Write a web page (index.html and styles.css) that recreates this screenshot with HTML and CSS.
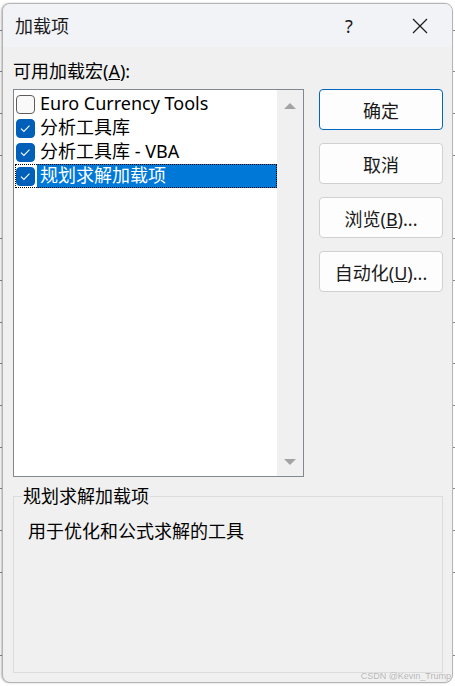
FILE: index.html
```html
<!DOCTYPE html>
<html lang="zh-CN">
<head>
    <meta charset="UTF-8">
    <meta name="viewport" content="width=device-width, initial-scale=1.0">
    <title>加载项</title>
    <link rel="stylesheet" href="styles.css">
</head>
<body>
    <div class="window">
        <div class="titlebar">
            <span class="title">加载项</span>
            <span class="help">?</span>
            <span class="close">
                <svg width="16" height="16" viewBox="0 0 16 16">
                    <path d="M1 1 L15 15 M15 1 L1 15" stroke="#1a1a1a" stroke-width="1.2" fill="none"/>
                </svg>
            </span>
        </div>

        <div class="client">
            <div class="main">
                <div class="list-label">可用加载宏(<u>A</u>):</div>

                <div class="listbox">
                    <div class="items">
                        <div class="item">
                            <span class="check"></span>
                            <span class="text">Euro Currency Tools</span>
                        </div>
                        <div class="item">
                            <span class="check checked"></span>
                            <span class="text">分析工具库</span>
                        </div>
                        <div class="item">
                            <span class="check checked"></span>
                            <span class="text">分析工具库 - VBA</span>
                        </div>
                        <div class="item selected">
                            <span class="check checked"></span>
                            <span class="text">规划求解加载项</span>
                        </div>
                    </div>
                    <div class="scrollbar">
                        <span class="arrow up"></span>
                        <span class="arrow down"></span>
                    </div>
                </div>

                <div class="buttons">
                    <button class="btn btn-default">确定</button>
                    <button class="btn">取消</button>
                    <button class="btn">浏览(<u>B</u>)...</button>
                    <button class="btn">自动化(<u>U</u>)...</button>
                </div>
            </div>

            <fieldset class="group">
                <legend>规划求解加载项</legend>
                <div class="desc">用于优化和公式求解的工具</div>
            </fieldset>
        </div>

        <div class="watermark">CSDN @Kevin_Trump</div>
    </div>
</body>
</html>
```

FILE: styles.css
```css
body {
    margin: 0;
    height: 686px;
    overflow: hidden;
    font-family: "Noto Sans", "Noto Sans CJK SC", sans-serif;
    background-color: #ffffff;
    background-image: repeating-linear-gradient(180deg, transparent 0, transparent 40.7px, #8a8a8a 40.7px, #8a8a8a 41.7px);
    background-position: 0 -11px;
}

.window {
    position: relative;
    margin: 3px 0 0 2px;
    width: 451px;
    height: 680px;
    box-sizing: border-box;
    border: 1px solid #b4b4b4;
    border-radius: 8px;
    background: #f0f0f0;
    overflow: hidden;
    box-shadow: -1px 0 2px rgba(0,0,0,0.25);
}

.titlebar {
    height: 43px;
    background: #f2f3f6;
    display: flex;
    align-items: center;
    padding-left: 12px;
}

.title {
    flex: 1;
    font-size: 18px;
    color: #1a1a1a;
    padding-bottom: 2px;
}

.help {
    font-size: 18px;
    color: #1a1a1a;
    width: 16px;
    margin-right: 55px;
    text-align: center;
}

.close {
    display: flex;
    width: 16px;
    margin-right: 24px;
    margin-top: 1px;
}

.client {
    padding: 12px 0 0 10px;
}

.main {
    display: grid;
    grid-template-columns: 291px 124px;
    column-gap: 15px;
    row-gap: 6px;
}

.list-label {
    grid-column: 1 / 3;
    font-size: 18px;
    line-height: 24px;
}

.listbox {
    height: 388px;
    box-sizing: border-box;
    border: 1px solid #828790;
    background: #ffffff;
    display: flex;
}

.items {
    flex: 1;
    padding-top: 2px;
}

.item {
    display: flex;
    align-items: center;
    height: 24px;
    margin-left: 1px;
    padding-left: 1px;
    font-size: 18px;
}

.item .text {
    line-height: 23px;
    padding: 0 0 1px 3px;
    margin-left: 2px;
    flex: 1;
    white-space: nowrap;
}

.item.selected {
    outline: 1px dotted #000;
    outline-offset: -1px;
}

.item.selected .text {
    background: #0078d7;
    color: #ffffff;
}

.check {
    width: 19px;
    height: 19px;
    box-sizing: border-box;
    border: 1px solid #5d5d5d;
    border-radius: 4px;
    background: #f9f9f9;
    flex: none;
}

.check.checked {
    border-color: #005fb8;
    background-color: #005fb8;
    background-image: url("data:image/svg+xml,%3Csvg xmlns='http://www.w3.org/2000/svg' width='19' height='19' viewBox='0 0 19 19'%3E%3Cpath d='M5 9.7 L7.9 12.4 L13.5 6.7' stroke='white' stroke-width='1.1' fill='none'/%3E%3C/svg%3E");
    background-position: center;
    background-repeat: no-repeat;
}

.scrollbar {
    width: 26px;
    background: #f0f0f0;
    display: flex;
    flex-direction: column;
    justify-content: space-between;
    align-items: center;
    padding: 13px 0 11px;
}

.arrow {
    width: 0;
    height: 0;
    border-left: 6px solid transparent;
    border-right: 6px solid transparent;
}

.arrow.up {
    border-bottom: 6px solid #a3a3a3;
}

.arrow.down {
    border-top: 6px solid #a3a3a3;
}

.buttons {
    display: flex;
    flex-direction: column;
    gap: 13px;
}

.btn {
    height: 41px;
    font-family: inherit;
    font-size: 18px;
    color: #1a1a1a;
    background: #fdfdfd;
    border: 1px solid #d0d0d0;
    border-radius: 4px;
    padding: 0;
}

.btn-default {
    border-color: #0067c0;
}

.group {
    margin: 8px 0 0 0;
    width: 430px;
    height: 188px;
    box-sizing: border-box;
    border: 1px solid #dcdcdc;
    padding: 0 0 0 14px;
}

.group legend {
    font-size: 18px;
    padding: 0 1px;
    margin-left: -6px;
    line-height: 22px;
}

.desc {
    font-size: 18px;
    margin-top: 12px;
    line-height: 24px;
}

.watermark {
    position: absolute;
    right: 1px;
    bottom: 1px;
    font-family: "Liberation Sans", sans-serif;
    font-size: 9px;
    color: #b4b4b4;
    text-shadow: 0 0 1px #ffffff;
}
```
